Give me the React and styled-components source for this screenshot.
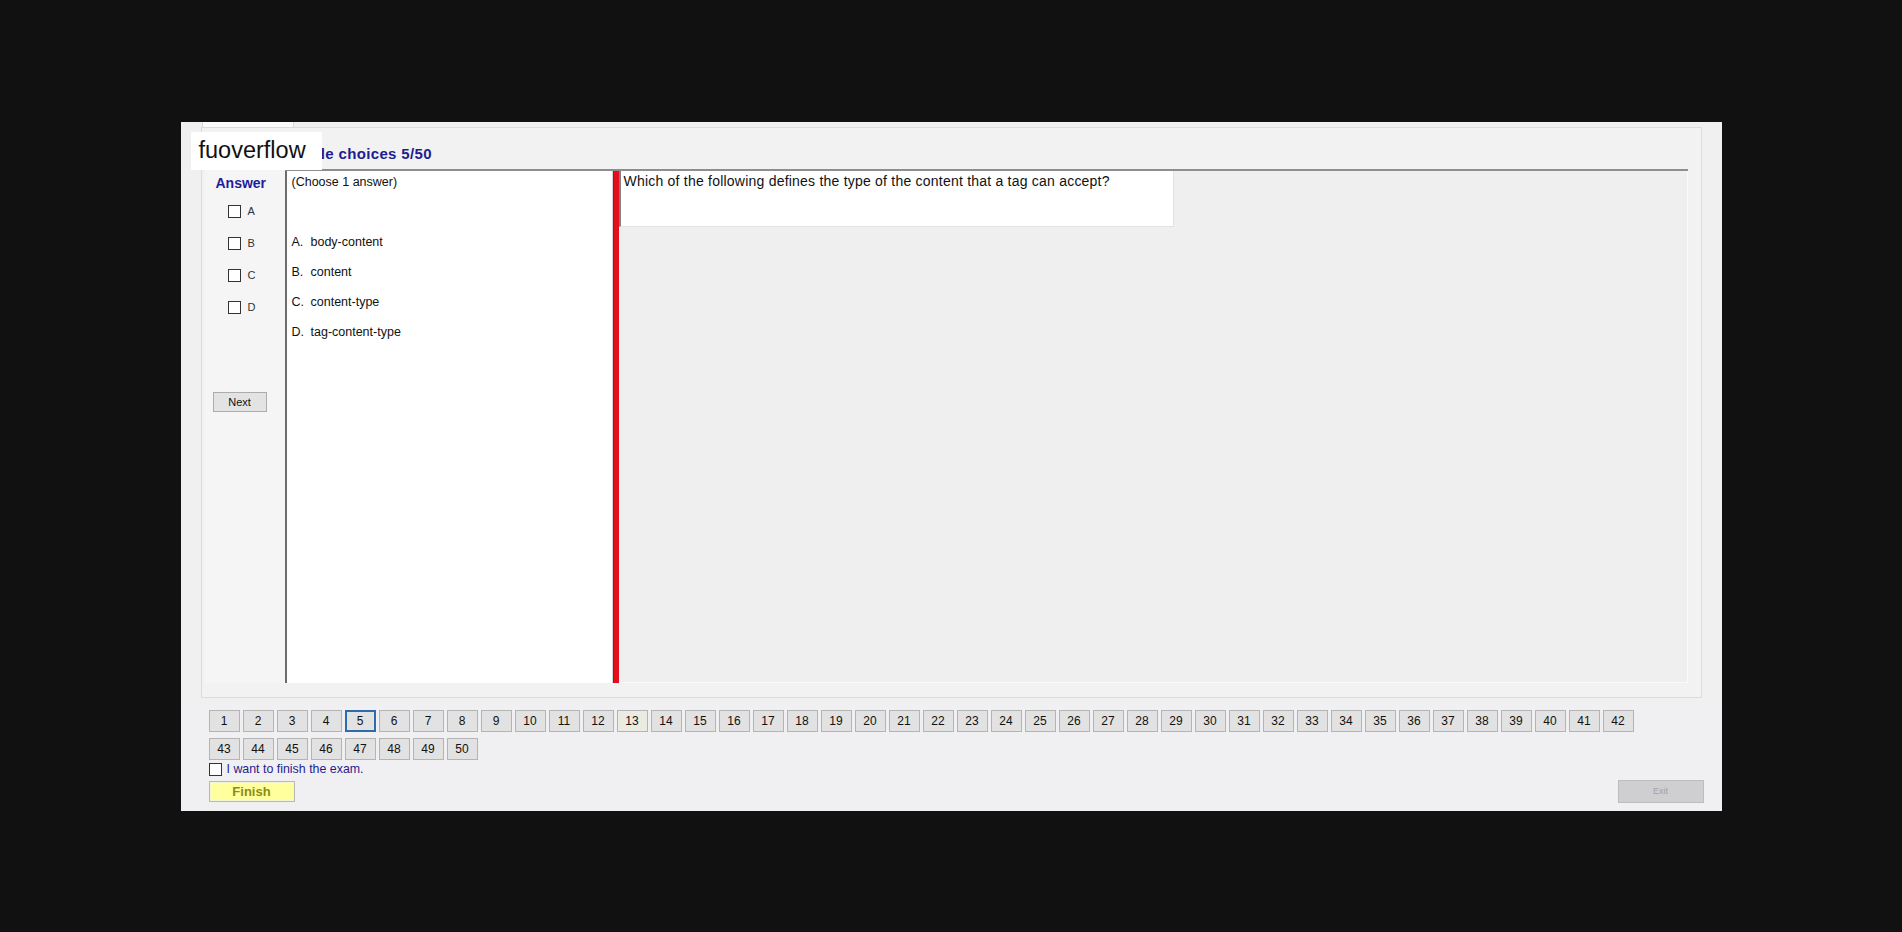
import styled, { createGlobalStyle } from "styled-components";

const GlobalStyle = createGlobalStyle`
  html, body {
    margin: 0;
    padding: 0;
    background: #111111;
  }
  body {
    font-family: "Liberation Sans", Arial, sans-serif;
  }
`;

const Page = styled.div`
  min-height: 100vh;
  display: flex;
  align-items: center;
  justify-content: center;
`;

const Window = styled.div`
  position: relative;
  box-sizing: border-box;
  width: 1541px;
  height: 689px;
  padding: 0 20px;

  display: flex;
  flex-direction: column;

  background: #f0f0f0;
`;

// watermark pasted over the top left corner
const Watermark = styled.div`
  position: absolute;
  left: 10px;
  top: 10px;
  width: 131px;
  height: 38px;
  padding-left: 8px;
  box-sizing: border-box;

  display: flex;
  align-items: center;

  background: #ffffff;
  font-family: "Liberation Sans", Arial, sans-serif;
  font-size: 23.5px;
  color: #111111;
`;

const TabStrip = styled.div`
  height: 5px;
  display: flex;
`;
const Tab = styled.div`
  margin-left: 1px;
  width: 90px;
  background: #fbfbfb;
  border-left: 1px solid #dadada;
  border-right: 1px solid #dadada;
`;

const TabPage = styled.div`
  box-sizing: border-box;
  height: 571px;
  padding: 0 13px 14px 3px;

  display: flex;
  flex-direction: column;

  border: 1px solid #dcdcdc;
  background: #f2f2f2;
`;

const TitleRow = styled.div`
  height: 41px;
  box-sizing: border-box;
  padding: 10px 0 0 70px;

  display: flex;
  align-items: center;
`;
const Title = styled.h1`
  margin: 0;
  font-size: 15px;
  letter-spacing: 0.35px;
  font-weight: bold;
  color: #1d1d92;
`;

const Body = styled.div`
  flex: 1;
  display: flex;
  min-height: 0;
`;

const AnswerCol = styled.div`
  width: 80px;
  padding-top: 6px;
  box-sizing: border-box;

  display: flex;
  flex-direction: column;

  background: #f5f5f5;
`;
const AnswerHead = styled.div`
  line-height: 16px;
  padding-left: 11px;
  font-size: 14px;
  font-weight: bold;
  color: #1d1d9c;
`;
const CheckList = styled.div`
  margin-top: 14px;
  padding-left: 23px;

  display: flex;
  flex-direction: column;
  gap: 19px;
`;
const CheckRow = styled.label`
  height: 13px;
  display: flex;
  align-items: center;
  gap: 7px;

  font-size: 11px;
  color: #333333;
`;
const Box = styled.span`
  width: 13px;
  height: 13px;
  box-sizing: border-box;
  border: 1px solid #333333;
  background: #ffffff;
`;
const NextBtn = styled.button`
  margin: 78px 0 0 8px;
  width: 54px;
  height: 20px;
  padding: 0;

  border: 1px solid #adadad;
  background: #e3e3e3;
  font-family: "Liberation Sans", Arial, sans-serif;
  font-size: 11px;
  color: #111111;
`;

const Split = styled.div`
  flex: 1;
  display: flex;
  border-top: 2px solid #8e8e8e;
`;

const ListPanel = styled.div`
  width: 328px;
  box-sizing: border-box;
  padding: 3px 0 0 5px;

  border-left: 2px solid #6c6c6c;
  border-right: 1px solid #d6d6d6;
  background: #ffffff;

  font-size: 12.5px;
  color: #111111;
`;
const Hint = styled.div`
  line-height: 16px;
`;
const Options = styled.div`
  margin-top: 44px;
  display: flex;
  flex-direction: column;
  gap: 14px;
`;
const Option = styled.div`
  line-height: 16px;
  display: flex;
`;
const OptKey = styled.span`
  width: 19px;
`;

const Splitter = styled.div`
  width: 6px;
  background: #e2101f;
  border-left: 1px solid #b80d18;
  box-sizing: border-box;
`;

const QuestionArea = styled.div`
  flex: 1;
  background: #efefef;
  border-right: 1px solid #fafafa;
  border-bottom: 1px solid #fafafa;
`;
const QuestionBox = styled.div`
  width: 555px;
  height: 56px;
  box-sizing: border-box;
  padding: 2px 0 0 3px;

  border-left: 2px solid #808080;
  border-right: 1px solid #e2e2e2;
  border-bottom: 1px solid #e2e2e2;
  background: #ffffff;

  font-size: 14px;
  letter-spacing: 0.22px;
  line-height: 16px;
  color: #111111;
`;

const Footer = styled.div`
  flex: 1;
  margin: 0 -20px;
  padding: 12px 18px 0 28px;

  display: flex;
  flex-direction: column;

  background: #f0f0f3;
`;
const NavGrid = styled.div`
  width: 1430px;
  display: flex;
  flex-wrap: wrap;
  column-gap: 3px;
  row-gap: 6px;
`;
const NavBtn = styled.button`
  width: 31px;
  height: 22px;
  padding: 0;
  box-sizing: border-box;

  border: ${(p) => (p.$current ? "2px solid #2f6cae" : "1px solid #b4b4b4")};
  background: ${(p) => (p.$seen ? "#ebebe2" : "#e2e2e2")};
  font-family: "Liberation Sans", Arial, sans-serif;
  font-size: 12px;
  color: #111111;
`;
const ConfirmRow = styled.label`
  margin-top: 3px;
  display: flex;
  align-items: center;
  gap: 5px;
  height: 13px;

  font-size: 12.4px;
  color: #2a1c8c;
`;
const ActionRow = styled.div`
  margin-top: 5px;
  display: flex;
  justify-content: space-between;
  align-items: flex-start;
`;
const FinishBtn = styled.button`
  width: 86px;
  height: 21px;
  padding: 0;

  border: 1px solid #b9b9b9;
  box-shadow: inset 0 0 0 1px #f4f4d0;
  background: #ffff9e;
  font-family: "Liberation Sans", Arial, sans-serif;
  font-size: 13px;
  font-weight: bold;
  color: #8c8c14;
`;
const ExitBtn = styled.button`
  margin-top: -1px;
  width: 86px;
  height: 23px;
  padding: 0;

  border: 1px solid #bdbdbd;
  background: #cfcfd2;
  font-family: "Liberation Sans", Arial, sans-serif;
  font-size: 9px;
  color: #a2a2a6;
`;

const options = [
  ["A.", "body-content"],
  ["B.", "content"],
  ["C.", "content-type"],
  ["D.", "tag-content-type"],
];

const numbers = Array.from({ length: 50 }, (_, i) => i + 1);

export default function App() {
  return (
    <>
      <GlobalStyle />
      <Page>
        <Window>
          <TabStrip>
            <Tab />
          </TabStrip>
          <TabPage>
            <TitleRow>
              <Title>Multiple choices 5/50</Title>
            </TitleRow>
            <Body>
              <AnswerCol>
                <AnswerHead>Answer</AnswerHead>
                <CheckList>
                  {["A", "B", "C", "D"].map((l) => (
                    <CheckRow key={l}>
                      <Box />
                      {l}
                    </CheckRow>
                  ))}
                </CheckList>
                <NextBtn>Next</NextBtn>
              </AnswerCol>
              <Split>
                <ListPanel>
                  <Hint>(Choose 1 answer)</Hint>
                  <Options>
                    {options.map(([k, t]) => (
                      <Option key={k}>
                        <OptKey>{k}</OptKey>
                        {t}
                      </Option>
                    ))}
                  </Options>
                </ListPanel>
                <Splitter />
                <QuestionArea>
                  <QuestionBox>
                    Which of the following defines the type of the content that a tag can accept?
                  </QuestionBox>
                </QuestionArea>
              </Split>
            </Body>
          </TabPage>
          <Footer>
            <NavGrid>
              {numbers.map((n) => (
                <NavBtn key={n} $current={n === 5} $seen={n === 13}>
                  {n}
                </NavBtn>
              ))}
            </NavGrid>
            <ConfirmRow>
              <Box />
              I want to finish the exam.
            </ConfirmRow>
            <ActionRow>
              <FinishBtn>Finish</FinishBtn>
              <ExitBtn>Exit</ExitBtn>
            </ActionRow>
          </Footer>
          <Watermark>fuoverflow</Watermark>
        </Window>
      </Page>
    </>
  );
}
